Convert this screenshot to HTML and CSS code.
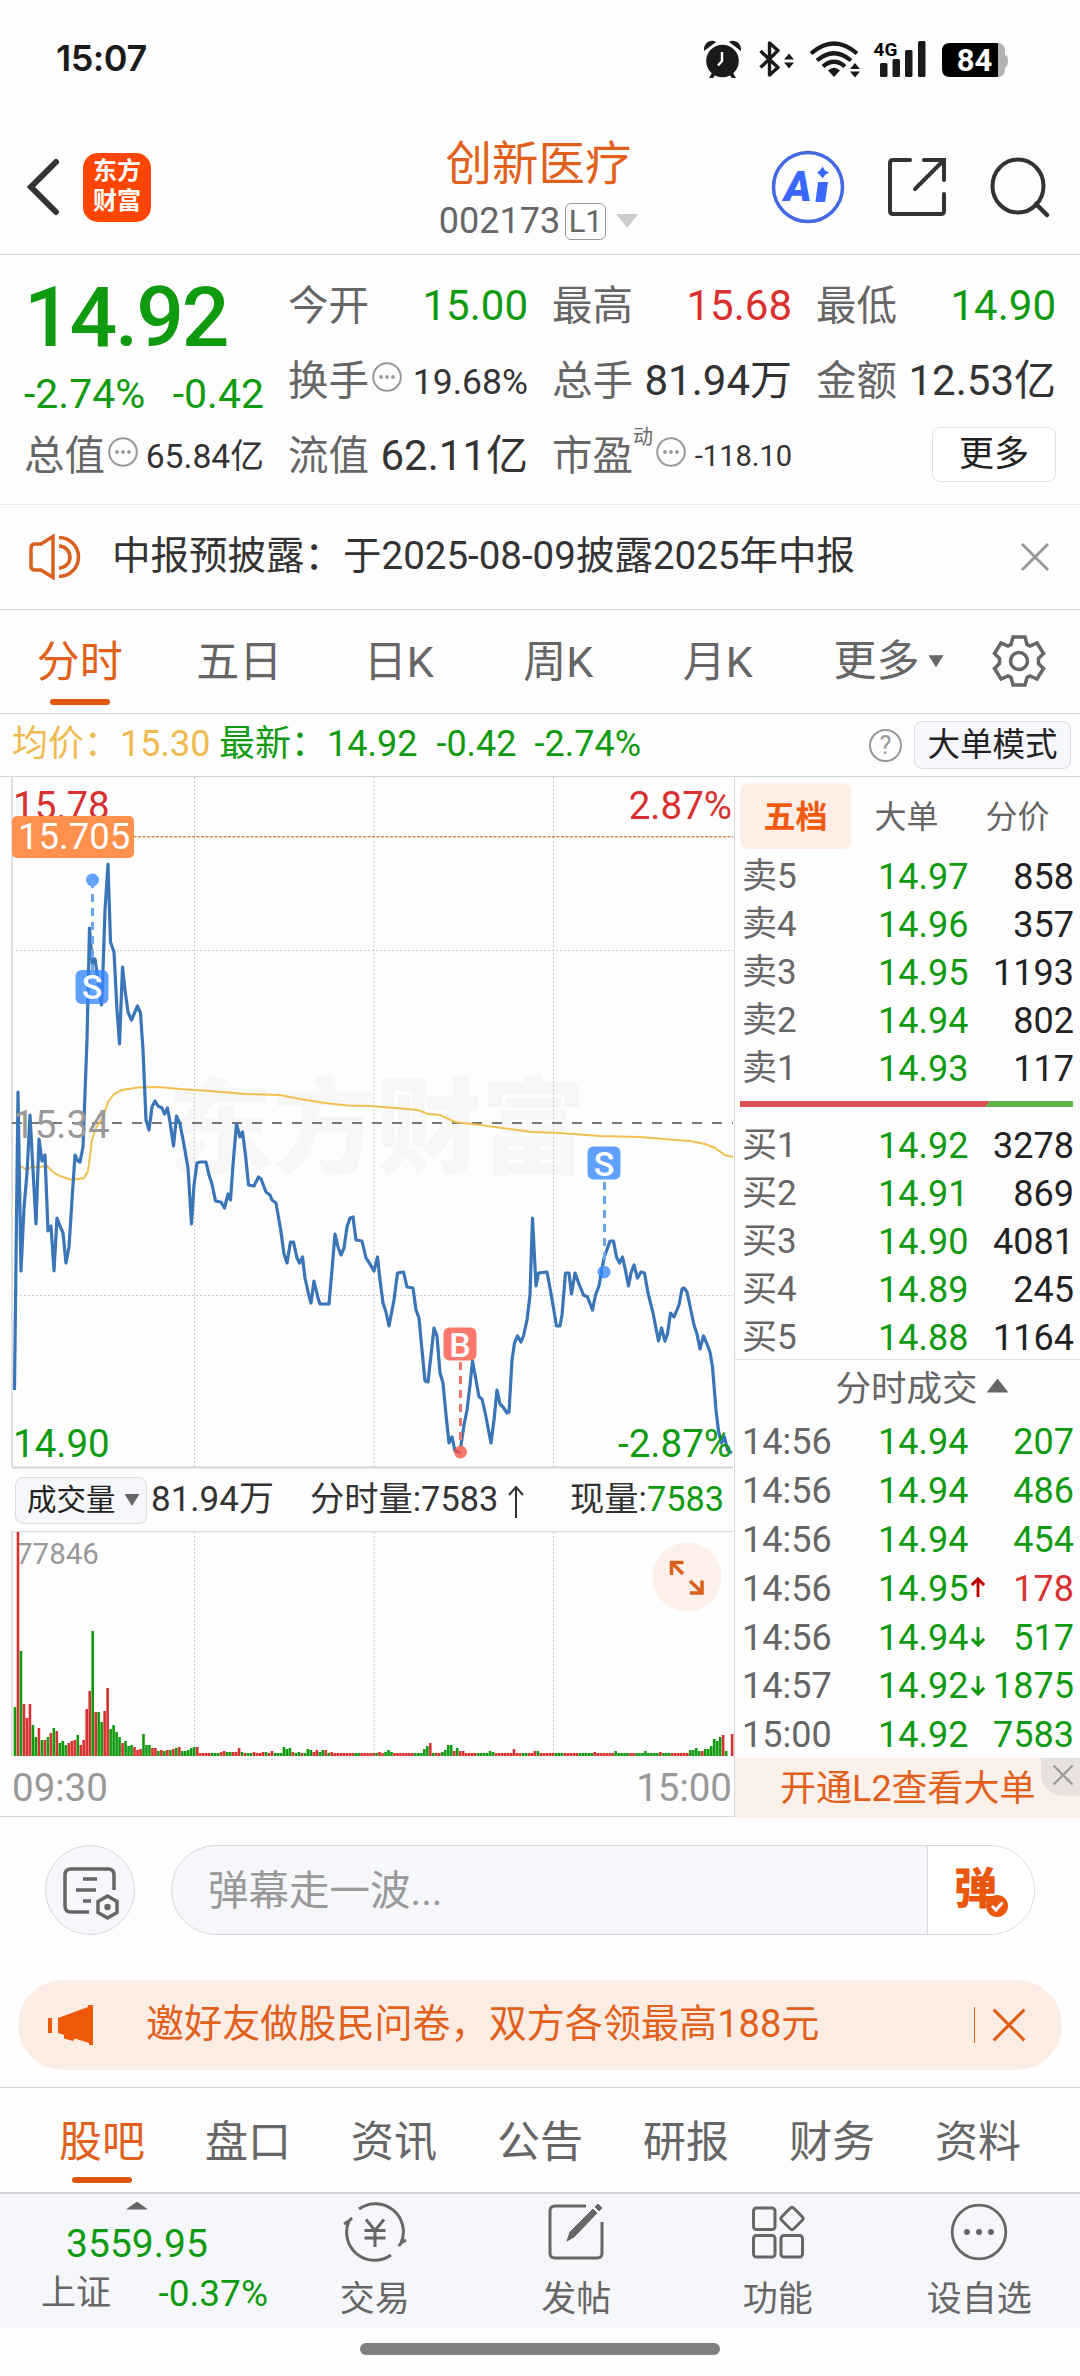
FILE: index.html
```html
<!DOCTYPE html>
<html lang="zh-CN">
<head>
  <meta charset="UTF-8" />
  <meta name="viewport" content="width=device-width, initial-scale=1" />
  <title>创新医疗 002173</title>
  <link rel="stylesheet" href="styles.css">
</head>
<body>

  <svg class="defs" width="0" height="0">
    <symbol id="dots" viewBox="0 0 30 30">
      <circle cx="15" cy="15" r="13.8" fill="none" stroke="#999" stroke-width="2" />
      <circle cx="9" cy="15" r="1.9" fill="#999" />
      <circle cx="15" cy="15" r="1.9" fill="#999" />
      <circle cx="21" cy="15" r="1.9" fill="#999" />
    </symbol>
    <symbol id="cross" viewBox="0 0 30 30">
      <path d="M2 2 L28 28 M28 2 L2 28" fill="none" stroke="currentColor" stroke-width="3" />
    </symbol>
    <symbol id="up" viewBox="0 0 16 22">
      <path d="M8 21 V2 M1.5 8.5 L8 2 L14.5 8.5" fill="none" stroke="currentColor" stroke-width="3" />
    </symbol>
  </svg>

  <!-- 状态栏 -->
  <div class="status">
    <span class="time">15:07</span>
    <svg width="320" height="50" viewBox="700 34 320 50">
      <g fill="#1a1a1a">
        <circle cx="722.5" cy="61" r="16.3" />
        <path d="M704 51 C703 43 711 38.500 716 42 Z M741 51 C742 43 734 38.500 729 42 Z" />
        <path d="M712 73 L709 78 L713 78 L716 74 Z M733 73 L736 78 L732 78 L729 74 Z" />
        <path d="M784 59.500 L789 53.500 L794 59.500 Z M784 62.500 L789 68.500 L794 62.500 Z" />
        <path d="M850 69 L855 63 L860 69 Z M850 71.500 L855 77.500 L860 71.500 Z" />
        <path d="M834 77 L828 70.500 Q834 65 840 70.500 Z" />
        <rect x="880" y="63" width="7.500" height="14" rx="1.500" />
        <rect x="892.500" y="59" width="7.500" height="18" rx="1.500" />
        <rect x="905" y="50" width="7.500" height="27" rx="1.500" />
        <rect x="918" y="41" width="7.500" height="36" rx="1.500" />
      </g>
      <path d="M722 52 V61 L718 65.500" fill="none" stroke="#fff" stroke-width="2.400" />
      <path d="M760.500 51 L778 67.500 L769.500 75 V43 L778 50.500 L760.500 67.500" fill="none" stroke="#1a1a1a" stroke-width="3.400" stroke-linejoin="round" />
      <path d="M811 53.500 Q834 33.500 857 53.500 M817 60.500 Q834 46 851 60.500 M823 66.500 Q834 57 845 66.500" fill="none" stroke="#1a1a1a" stroke-width="4.200" />
      <text x="873.500" y="56" class="net">4G</text>
      <path d="M996 43 h1 q8 0 8 8 v4 q3 0 3 6 t-3 6 v3 q0 7 -8 7 h-1 z" fill="#b3b3b3" />
      <path d="M950 43 H998 V77 H950 Q942 77 942 69 V51 Q942 43 950 43 Z" fill="#000" />
      <text x="974.500" y="71" class="battery" text-anchor="middle">84</text>
    </svg>
  </div>

  <!-- 标题栏 -->
  <header class="header">
    <div class="side">
      <svg width="34" height="58" viewBox="0 0 34 58"><path d="M30 4 L5 29 L30 54" fill="none" stroke="#333" stroke-width="6" stroke-linecap="round" /></svg>
      <div class="logo">东方<br>财富</div>
    </div>
    <div class="title">
      <h1>创新医疗</h1>
      <div class="code">002173<span class="level">L1</span><i class="tri down light"></i></div>
    </div>
    <div class="side right">
      <svg width="74" height="74" viewBox="0 0 74 74">
        <circle cx="37" cy="37" r="34.500" fill="none" stroke="#4468e2" stroke-width="3.500" />
        <text x="13" y="51" class="ai">A</text>
        <path d="M47 32 H57 L54 52 H44.500 Z M51.500 16.500 L54 20.500 L58 22.500 L54 25 L51.500 28.500 L49 25 L46 22.500 L49 20.500 Z" fill="#3a68ff" />
      </svg>
      <svg width="60" height="60" viewBox="0 0 60 60">
        <path d="M23 3 H6 Q3 3 3 6 V54 Q3 57 6 57 H54 Q57 57 57 54 V37 M37 3 H57 V23 M56 4 L28 32" fill="none" stroke="#333" stroke-width="4" stroke-linecap="round" />
      </svg>
      <svg width="62" height="62" viewBox="0 0 62 62">
        <ellipse cx="29" cy="30" rx="25.500" ry="26.500" fill="none" stroke="#333" stroke-width="4" />
        <path d="M47 48 L58 59" fill="none" stroke="#333" stroke-width="4.500" stroke-linecap="round" />
      </svg>
    </div>
  </header>

  <!-- 行情 -->
  <section class="quote">
    <div class="price green">
      <strong>14.92</strong>
      <div class="change"><span>-2.74%</span><span>-0.42</span></div>
    </div>
    <div class="cell"><label>今开</label><b class="green">15.00</b></div>
    <div class="cell"><label>最高</label><b class="red">15.68</b></div>
    <div class="cell"><label>最低</label><b class="green">14.90</b></div>
    <div class="cell"><label>换手</label><svg class="dots"><use href="#dots" /></svg><b class="s35">19.68%</b></div>
    <div class="cell"><label>总手</label><b>81.94万</b></div>
    <div class="cell"><label>金额</label><b>12.53亿</b></div>
    <div class="cell"><label>总值</label><svg class="dots"><use href="#dots" /></svg><b class="s33">65.84亿</b></div>
    <div class="cell"><label>流值</label><b>62.11亿</b></div>
    <div class="cell"><label>市盈</label><sup>动</sup><svg class="dots"><use href="#dots" /></svg><b class="s29">-118.10</b></div>
    <div class="cell"><button class="more">更多</button></div>
  </section>

  <section class="notice">
    <svg width="52" height="46" viewBox="0 0 52 46">
      <path d="M24 2.500 V43.500 L12 36 H6 Q2 36 2 32 V14 Q2 10 6 10 H12 Z M30 12 A11 11 0 0 1 30 34 M30 3.500 A19.500 19.500 0 0 1 30 42.500" fill="none" stroke="#d9601f" stroke-width="3.500" />
    </svg>
    <p>中报预披露：于2025-08-09披露2025年中报</p>
    <svg class="close"><use href="#cross" /></svg>
  </section>

  <nav class="periods">
    <a class="active">分时</a>
    <a>五日</a>
    <a>日K</a>
    <a>周K</a>
    <a>月K</a>
    <a class="wide">更多<i class="tri down"></i></a>
    <svg width="54" height="54" viewBox="-27 -27 54 54">
      <path d="M-6 -24 H6 L8 -16.500 L11 -15 L18 -18 L24.500 -7.500 L19.500 -2.500 V2.500 L24.500 7.500 L18 18 L11 15 L8 16.500 L6 24 H-6 L-8 16.500 L-11 15 L-18 18 L-24.500 7.500 L-19.500 2.500 V-2.500 L-24.500 -7.500 L-18 -18 L-11 -15 L-8 -16.500 Z" fill="none" stroke="#666" stroke-width="3.500" />
      <circle r="8.500" fill="none" stroke="#666" stroke-width="3.500" />
    </svg>
  </nav>

  <div class="summary">
    <span class="avg">均价：15.30</span>
    <span class="green latest">最新：14.92</span>
    <span class="green">-0.42</span>
    <span class="green">-2.74%</span>
    <span class="help">?</span>
    <button>大单模式</button>
  </div>

  <main class="main">
    <div class="left">
      <!-- 分时图 -->
      <svg class="chart" width="734" height="692" viewBox="0 777 734 692">
        <text class="mark" x="168" y="1165" textLength="418">东方财富</text>
        <g fill="none" stroke="#ccc" stroke-width="1" stroke-dasharray="2 2">
          <path d="M194.500 777 V1467 M374 777 V1467 M553.500 777 V1467 M12 950.500 H733 M12 1295.500 H733" />
        </g>
        <path d="M12 777 V1467" stroke="#e0e0e0" stroke-width="2" />
        <path d="M12 1467.500 H733" stroke="#d6d6d6" stroke-width="2" />
        <path d="M12 836.800 H733" stroke="#d98a5c" stroke-width="1.600" stroke-dasharray="3 1.500" />
        <path d="M12 1123 H733" stroke="#777" stroke-width="2" stroke-dasharray="10 10" />
        <text class="axis red" x="13" y="819">15.78</text>
        <text class="axis red" x="732" y="819" text-anchor="end">2.87%</text>
        <text class="axis green" x="13" y="1457">14.90</text>
        <polyline class="avg-line" points="18,1166 22,1167 27,1170 31,1167 38,1167 47,1166 54,1173 60,1176 72,1180 84,1178 88,1171 92,1140 96,1128 103,1117 108,1102 114,1094 122,1090 138,1087.5 158,1087 180,1089 210,1091 245,1094 280,1095 300,1099 325,1103 348,1105.5 370,1106 395,1108 418,1110 428,1114 440,1115 455,1122 480,1125 510,1129 532,1132 560,1133 600,1136 640,1137 675,1140 690,1141 705,1144 715,1148 725,1155 733,1157" />
        <polyline class="price-line" points="14.5,1390 18,1092 21,1271 24,1208 27,1173 30,1115 33,1170 36,1224 39,1139 42,1161 45,1155 48,1231 51,1226 54,1271 57,1218 60,1226 63,1233 66,1263 69,1247 72,1200 75,1155 78,1161 80,1162 83,1147 84,1120 87,1040 89.5,928 92.5,965 95,959 98,980 101.5,1005 103,970 105,910 108,864 110.5,942 114,952 117,1010 119.5,1044 122.5,967 125,990 128,1012 131.500,1020 137.5,1006 140.5,1013 143,1050 146,1120 149,1130 152,1107 155,1101 158,1106 162,1108 164.5,1114 167.5,1108 170,1122 173.5,1146 176.5,1116 180,1124 184,1145 188,1168 191.5,1224 194,1185 197,1163 200,1162 206,1162 209,1175 212,1184 215.5,1201 221,1202 224.5,1208 228,1194 230.5,1200 233,1165 236.5,1124 240,1137 242.5,1132 245.5,1155 248.5,1185 254,1186 258.5,1177 261,1179 266,1192 270,1195 272,1200 276,1203 281,1232 284,1254 287,1263 290.5,1242 293.5,1242 297,1258 299.5,1263 302.5,1257 305,1278 309,1296 311,1303 314,1281 318,1298 320,1304 329,1304 332,1270 335,1234 338,1247 341,1255 344,1248 347,1227 350,1218 353,1217 356,1240 362,1241 366,1258 370,1264 374,1271 377.5,1257 380,1280 383,1303 386,1312 389,1326 394,1300 397.5,1273 403.5,1272 407,1287 413,1288 416,1310 419,1318 421.5,1345 425,1381 428,1382 434,1328 437,1336 440,1373 443,1383 446,1415 449,1443 452,1437 455,1451 460,1452 464,1425 467,1410 470,1385 472.5,1361 476,1380 479,1397 482,1399 485,1412 491,1443 494,1420 497,1390 500,1404 503,1407 507,1413 509,1412 512,1360 514.5,1343 517.5,1336 521,1342 523.5,1336 527,1320 530,1295 532.5,1218 536,1286 538.5,1273 547,1272 550,1288 553.5,1308 556.5,1326 560,1326 562,1315 565.5,1273 569,1273 571.5,1294 575,1273 579,1284 583.5,1295 587.5,1297 592.5,1310 595.5,1295 599,1286 604,1258 610,1241 613.5,1241 616.5,1257 619.5,1263 622.5,1257 625,1268 628.5,1286 631,1273 634,1265 637.5,1278 641,1272 644.5,1273 648,1293 653,1313 658.5,1341 661.5,1328 665,1341 667.5,1334 670.5,1313 674,1317 679,1305 682,1289 684,1288 687,1292 690,1306 694,1325 697,1334 700,1349 703.5,1336 707,1344 710,1352 712.5,1367 716,1410 718.5,1431 721.5,1443 724.5,1437 727.5,1450 732,1453" />
        <text class="axis grey" x="13" y="1138">15.34</text>
        <text class="axis green" x="732" y="1457" text-anchor="end">-2.87%</text>

        <!-- 最高提示 -->
        <rect x="12" y="816" width="122" height="42" rx="5" fill="#ff914d" />
        <text class="tip" x="18" y="849">15.705</text>

        <!-- 买卖点 -->
        <g class="sell">
          <circle cx="92.500" cy="880" r="6.500" />
          <path d="M92.500 880 V970" />
          <rect x="75.500" y="970" width="33" height="34" rx="6" />
          <text x="92" y="999">S</text>
          <circle cx="604" cy="1272" r="6.500" />
          <path d="M604.500 1182 V1272" />
          <rect x="587.500" y="1146.500" width="33" height="33" rx="6" />
          <text x="604" y="1175.500">S</text>
        </g>
        <g class="buy">
          <circle cx="460.500" cy="1452" r="6.500" />
          <path d="M460.500 1362 V1452" />
          <rect x="443.500" y="1327.500" width="33" height="33" rx="6" />
          <text x="460" y="1356.500">B</text>
        </g>
      </svg>

      <div class="volume-bar">
        <button>成交量<i class="tri down"></i></button>
        <span class="total">81.94万</span>
        <span class="minute">分时量:7583<svg width="16" height="34" viewBox="0 0 16 34"><path d="M8 33 V2 M1 10 L8 2 L15 10" fill="none" stroke="#333" stroke-width="2" /></svg></span>
        <span class="now">现量:<em class="green">7583</em></span>
      </div>

      <!-- 成交量柱 -->
      <svg class="chart" width="734" height="226" viewBox="0 1531 734 226">
        <path d="M194.500 1532 V1756 M374 1532 V1756 M553.500 1532 V1756" fill="none" stroke="#ccc" stroke-width="1" stroke-dasharray="2 2" />
        <path d="M12 1757 V1531.500 H733" fill="none" stroke="#ddd" stroke-width="1.500" />
        <text x="16" y="1564" class="max">77846</text>
        <path id="red-bars" fill="#d93030" />
        <path id="green-bars" fill="#109a10" />
        <circle cx="687" cy="1577" r="34.500" fill="#fdf0e9" />
        <path d="M683.500 1562.500 H671.500 V1575 M672 1563 L683 1574 M690 1593 H702 V1580.500 M701.500 1592 L690 1581" fill="none" stroke="#d9601f" stroke-width="3.500" />
      </svg>
      <div class="hours"><span>09:30</span><span>15:00</span></div>
    </div>

    <aside class="depth">
      <div class="depth-tabs"><span class="on">五档</span><span>大单</span><span>分价</span></div>
      <div class="rows">
        <div class="row"><i>卖5</i><b>14.97</b><u>858</u></div>
        <div class="row"><i>卖4</i><b>14.96</b><u>357</u></div>
        <div class="row"><i>卖3</i><b>14.95</b><u>1193</u></div>
        <div class="row"><i>卖2</i><b>14.94</b><u>802</u></div>
        <div class="row"><i>卖1</i><b>14.93</b><u>117</u></div>
      </div>
      <svg class="ratio" width="333" height="6" viewBox="0 0 333 6">
        <path d="M0 0 H250 L245 6 H0 Z" fill="#dc5050" />
        <path d="M250 0 H333 V6 H245 Z" fill="#62b34a" />
      </svg>
      <div class="rows">
        <div class="row"><i>买1</i><b>14.92</b><u>3278</u></div>
        <div class="row"><i>买2</i><b>14.91</b><u>869</u></div>
        <div class="row"><i>买3</i><b>14.90</b><u>4081</u></div>
        <div class="row"><i>买4</i><b>14.89</b><u>245</u></div>
        <div class="row"><i>买5</i><b>14.88</b><u>1164</u></div>
      </div>
      <div class="deals-title">分时成交<i class="tri"></i></div>
      <div class="rows deals">
        <div class="row"><i>14:56</i><b>14.94</b><u class="green">207</u></div>
        <div class="row"><i>14:56</i><b>14.94</b><u class="green">486</u></div>
        <div class="row"><i>14:56</i><b>14.94</b><u class="green">454</u></div>
        <div class="row"><i>14:56</i><b>14.95<svg class="arrow rise"><use href="#up" /></svg></b><u class="red">178</u></div>
        <div class="row"><i>14:56</i><b>14.94<svg class="arrow fall"><use href="#up" /></svg></b><u class="green">517</u></div>
        <div class="row"><i>14:57</i><b>14.92<svg class="arrow fall"><use href="#up" /></svg></b><u class="green">1875</u></div>
        <div class="row"><i>15:00</i><b>14.92</b><u class="green">7583</u></div>
      </div>
      <div class="level2">开通L2查看大单<span class="chip"><svg width="22" height="22"><use href="#cross" /></svg></span></div>
    </aside>
  </main>

  <!-- 弹幕 -->
  <div class="danmu">
    <div class="round">
      <svg width="58" height="56" viewBox="0 0 58 56">
        <path d="M27 46 H9 Q3 46 3 40 V9 Q3 3 9 3 H46 Q52 3 52 9 V24" fill="none" stroke="#666" stroke-width="3.500" />
        <path d="M21 13 H35 M14 24 H34 M21 35 H29" stroke="#666" stroke-width="3.500" />
        <path d="M45.500 30 L55 35.500 V46.500 L45.500 52 L36 46.500 V35.500 Z" fill="none" stroke="#666" stroke-width="3.500" />
        <circle cx="45.500" cy="41" r="3.200" fill="#666" />
      </svg>
    </div>
    <div class="input">
      <span class="placeholder">弹幕走一波...</span>
      <span class="toggle">弹<svg class="badge" width="24" height="24" viewBox="0 0 24 24"><circle cx="12" cy="12" r="11" fill="#e8570c" /><path d="M7 12 L11 16 L17.500 8.500" fill="none" stroke="#fff" stroke-width="3" /></svg></span>
    </div>
  </div>

  <div class="banner">
    <svg width="46" height="40" viewBox="0 0 46 40">
      <path d="M0 13 H4 V28 H0 Z M10 13 L40 2 V0 H45 V40 H41 V38 L27 33.500 L25 36 L16 33.500 V30 L10 28 Z" fill="#ee5a08" />
    </svg>
    <p>邀好友做股民问卷，双方各领最高188元</p>
    <span class="bar"></span>
    <svg width="34" height="34" viewBox="0 0 30 30"><path d="M1.500 1.500 L28.500 28.500 M28.500 1.500 L1.500 28.500" stroke="#e0601c" stroke-width="2.800" /></svg>
  </div>

  <nav class="sections">
    <a class="active">股吧</a><a>盘口</a><a>资讯</a><a>公告</a><a>研报</a><a>财务</a><a>资料</a>
  </nav>

  <footer class="toolbar">
    <div class="index">
      <i class="tri small"></i>
      <div class="green point">3559.95</div>
      <div class="line"><span>上证</span><span class="green rate">-0.37%</span></div>
    </div>
    <div class="tool">
      <svg width="68" height="60" viewBox="-34 -30 68 60">
        <g fill="none" stroke="#666" stroke-width="3">
          <path d="M-16 -23 A28 28 0 0 1 26 11 L31 8 M26 11 L24 14 M16 23 A28 28 0 0 1 -26 -11 L-31 -8 M-26 -11 L-23 -14" />
          <path d="M-9 -12.500 L0 -1.500 L9 -12.500 M0 -1.500 V15 M-10.500 -1.500 H10.500 M-10.500 6 H10.500" />
        </g>
      </svg>
      <span>交易</span>
    </div>
    <div class="tool">
      <svg width="60" height="60" viewBox="-30 -30 60 60">
        <path d="M10 -26 H-21 Q-26 -26 -26 -21 V21 Q-26 26 -21 26 H21 Q26 26 26 21 V-10" fill="none" stroke="#666" stroke-width="3" />
        <path d="M-9 9 L-6 0 L17 -23 L21 -19 L-2 5 Z M19 -25 L22 -28 L26 -24 L23 -21 Z" fill="#666" stroke="#666" />
      </svg>
      <span>发帖</span>
    </div>
    <div class="tool">
      <svg width="60" height="60" viewBox="-30 -30 60 60">
        <g fill="none" stroke="#666" stroke-width="3">
          <rect x="-24.500" y="-24" width="21.500" height="21.500" rx="3" />
          <rect x="-24.500" y="3.500" width="21.500" height="21.500" rx="3" />
          <rect x="3" y="3.500" width="21.500" height="21.500" rx="3" />
          <rect x="5.500" y="-22" width="17" height="17" rx="2.500" transform="rotate(45 14 -13.500)" />
        </g>
      </svg>
      <span>功能</span>
    </div>
    <div class="tool">
      <svg width="60" height="60" viewBox="-30 -30 60 60">
        <circle r="26.800" fill="none" stroke="#666" stroke-width="2.800" />
        <g fill="#666"><circle cx="-12" r="3" /><circle r="3" /><circle cx="12" r="3" /></g>
      </svg>
      <span>设自选</span>
    </div>
  </footer>
  <div class="home"><span></span></div>

  <script src="script.js"></script>
</body>
</html>
```
FILE: styles.css
```css
* { margin: 0; padding: 0; box-sizing: border-box; }

body {
  width: 1080px;
  height: 2376px;
  overflow: hidden;
  background: #fefefe;
  color: #333;
  font-family: Roboto, "Noto Sans CJK SC", sans-serif;
  line-height: 1.2;
}

svg { display: block; flex: none; }
.defs { position: absolute; }
i, em, u { font-style: normal; text-decoration: none; }
b { font-weight: 400; }
button { font-family: inherit; color: #222; background: #f6f7fa; border: 1.5px solid #d9dbe0; border-radius: 8px; }

.green { color: #109a10; fill: #109a10; }
.red { color: #d93030; fill: #d93030; }

.tri {
  width: 22px;
  height: 14px;
  background: #666;
  clip-path: polygon(50% 0, 100% 100%, 0 100%);
}
.tri.down { clip-path: polygon(0 0, 100% 0, 50% 100%); }
.tri.light { background: #ccc; }

/* 状态栏 */
.status {
  height: 116px;
  padding: 34px 60px 0 56px;
  display: flex;
  justify-content: space-between;
}
.time {
  font: 600 36px/48px Inter, sans-serif;
  letter-spacing: -0.5px;
  color: #1a1a1a;
}
.net { font: 700 19px Roboto, sans-serif; }
.battery { font: 700 31px Roboto, sans-serif; fill: #fff; }

/* 标题栏 */
.header {
  height: 139px;
  border-bottom: 1.5px solid #d6d6d6;
  display: flex;
  justify-content: space-between;
  padding: 0 29px 0 26px;
}
.side { width: 280px; display: flex; align-items: center; padding-top: 4px; }
.side.right { gap: 42px; width: 280px; justify-content: flex-end; }
.logo {
  width: 68px;
  height: 69px;
  margin-left: 23px;
  border-radius: 15px;
  background: #ff4500;
  color: #fff;
  font-size: 24px;
  font-weight: 700;
  line-height: 30px;
  padding-top: 3px;
  text-align: center;
}
.title { text-align: center; }
.title h1 {
  font-size: 46.5px;
  font-weight: 400;
  line-height: 60px;
  padding-top: 18px;
  height: 80px;
  color: #e0601c;
  margin-left: 0;
}
.code { display: flex; align-items: center; justify-content: center; color: #666; font-size: 36px; line-height: 50px; height: 50px; }
.level {
  width: 41px;
  height: 37px;
  margin: 0 10px 0 5px;
  border: 1.5px solid #999;
  border-radius: 6px;
  font-size: 31px;
  line-height: 35px;
}
.ai { font: italic 900 42px Roboto, sans-serif; fill: #3a68ff; }

/* 行情 */
.quote {
  height: 249.5px;
  padding: 14px 24px 0;
  border-bottom: 1.5px solid #eaeaea;
  display: grid;
  grid-template-columns: repeat(4, 240px);
  grid-template-rows: repeat(3, 75px);
  column-gap: 24px;
}
.price { grid-row: span 2; }
.price strong { display: block; font-size: 84px; font-weight: 500; line-height: 80px; margin-top: 9px; letter-spacing: -2.2px; }
.change { display: flex; justify-content: space-between; font-size: 41px; line-height: 60px; margin-top: 6px; }
.cell { display: flex; align-items: center; white-space: nowrap; }
.cell label { font-size: 40.5px; color: #666; }
.cell b { margin-left: auto; font-size: 42px; }
.cell .s35 { font-size: 35.5px; padding-top: 1px; }
.cell .s33 { font-size: 33.7px; padding-top: 1px; }
.cell .s29 { font-size: 29px; }
.dots { width: 30px; height: 30px; margin: -9px 0 0 3px; }
.cell sup { font-size: 20px; color: #666; margin-top: -40px; }
.cell .more {
  margin: -4px 0 0 auto;
  width: 124px;
  height: 55px;
  font-size: 35px;
  line-height: 50px;
  background: #fff;
  border-color: #e3e3e6;
}

.notice {
  height: 105px;
  border-bottom: 1.5px solid #d6d6d6;
  padding: 0 30px 0 29px;
  display: flex;
  align-items: center;
}
.notice p { flex: 1; margin-left: 31px; font-size: 38.5px; }
.close { width: 30px; height: 30px; color: #999; }

/* 周期 */
.periods { height: 104.5px; border-bottom: 1.5px solid #d6d6d6; display: flex; align-items: center; color: #666; }
.periods a { width: 159.5px; height: 103px; line-height: 105px; font-size: 43px; text-align: center; position: relative; }
.periods .wide { width: 190px; margin-left: -4px; display: flex; align-items: center; justify-content: center; }
.periods .wide .tri { width: 15px; height: 12px; margin: 0 0 0 9px; }
.periods svg { margin-left: 8px; }
.periods .active, .sections .active { color: #e0601c; }
.periods .active::after, .sections .active::after {
  content: "";
  position: absolute;
  left: calc(50% - 30px);
  bottom: 8px;
  width: 60px;
  height: 6px;
  border-radius: 3px;
  background: #e0560f;
}

.summary { height: 63px; border-bottom: 1.5px solid #d6d6d6; display: flex; align-items: center; font-size: 36px; padding: 0 9px 0 12px; white-space: nowrap; }
.summary .avg { color: #f0ba4e; width: 207px; }
.summary .latest { margin-right: 19px; }
.summary .green + .green + .green { margin-left: 18px; }
.help {
  width: 33px;
  height: 33px;
  margin-left: auto;
  border: 2.5px solid #999;
  border-radius: 50%;
  color: #999;
  font-size: 25px;
  line-height: 29px;
  text-align: center;
}
.summary button { width: 157px; height: 48px; margin-left: 12px; font-size: 32.5px; line-height: 44px; }

/* 图表 */
.main { display: flex; height: 1040px; border-bottom: 1.5px solid #d6d6d6; }
.left { width: 734px; }
.mark { font-size: 105px; font-weight: 900; fill: #f7f7f7; }
.axis { font-size: 38.5px; }
.grey { fill: #999; }
.tip { font-size: 36.5px; fill: #fff; }
.price-line { fill: none; stroke: #3975b7; stroke-width: 3.2; stroke-linejoin: round; }
.avg-line { fill: none; stroke: #f2c050; stroke-width: 2; }
.sell, .buy { fill: #3385ff; fill-opacity: .78; }
.buy { fill: #fa4a38; fill-opacity: .74; }
.sell path { stroke: #6ba4ef; stroke-width: 3; stroke-dasharray: 8 6; }
.buy path { stroke: #f0766a; stroke-width: 3; stroke-dasharray: 8 6; }
.sell text, .buy text { font-size: 34px; font-weight: 500; fill: #fff; fill-opacity: 1; text-anchor: middle; }

.volume-bar { height: 62px; padding: 0 10px 0 15px; display: flex; align-items: center; font-size: 35px; white-space: nowrap; }
.volume-bar button { width: 132px; height: 47px; font-size: 29.5px; line-height: 43px; display: flex; align-items: center; padding-left: 11px; }
.volume-bar .tri { width: 15px; height: 12px; margin-left: 9px; }
.total { margin-left: 4px; font-size: 35px; }
.minute { margin-left: 36px; display: flex; align-items: center; font-size: 34.3px; }
.minute svg { margin: 4px 0 0 10px; }
.now { margin-left: auto; font-size: 34.3px; }
.max { font-size: 29.5px; fill: #999; }
.hours { display: flex; justify-content: space-between; padding: 1px 2px 0 12px; font-size: 38.5px; line-height: 59px; color: #999; }

/* 五档 */
.depth { width: 346px; border-left: 1.5px solid #d6d6d6; }
.depth-tabs { height: 75px; padding: 6px 5px 0; display: flex; font-size: 32px; line-height: 69px; color: #666; }
.depth-tabs span { width: 111px; height: 66px; text-align: center; }
.depth-tabs .on { background: #feeee6; color: #f05a10; font-weight: 700; border-radius: 8px; }
.row { height: 48px; padding: 2px 6px 0 7px; display: flex; align-items: center; font-size: 36px; line-height: 46px; }
.row i { width: 136px; color: #666; }
.row b { color: #109a10; display: flex; align-items: center; }
.row u { margin-left: auto; color: #222; }
.row .green { color: #109a10; }
.row .red { color: #d93030; }
.rows .row i { font-size: 35px; }
.deals .row { height: 48.8px; }
.deals .row i { font-size: 36px; }
.arrow { width: 16px; height: 21px; margin: -2px 0 0 2px; }
.rise { color: #c00000; }
.fall { transform: rotate(180deg); }
.ratio { margin: 9px 0 14px 5px; }
.deals-title {
  height: 58px;
  border-top: 1.5px solid #e3e3e3;
  color: #666;
  font-size: 35.5px;
  line-height: 60px;
  display: flex;
  align-items: center;
  justify-content: center;
  padding-left: 29px;
  margin-top: -2px;
}
.deals-title .tri { margin: -6px 0 0 9px; }
.level2 {
  position: relative;
  height: 60px;
  margin-top: -1px;
  background: #fcf0ea;
  color: #e0601c;
  font-size: 36px;
  line-height: 62px;
  padding-left: 45px;
}
.chip {
  position: absolute;
  top: 0;
  right: 0;
  width: 39px;
  height: 38px;
  padding: 6px 0 0 11px;
  background: #e9e1dd;
  border-radius: 0 0 0 22px;
  color: #999;
}

/* 弹幕 */
.danmu { height: 163px; padding: 28px 45px 0; display: flex; gap: 36px; }
.round { width: 90px; height: 90px; border: 1.5px solid #d6d8dc; border-radius: 50%; background: #f6f7fa; padding: 20px 0 0 16px; }
.input { width: 864px; height: 90px; border: 1.5px solid #d6d8dc; border-radius: 45px; background: #f6f7fa; display: flex; justify-content: space-between; overflow: hidden; }
.placeholder { font-size: 40.5px; line-height: 91px; color: #999; padding-left: 36px; }
.toggle { position: relative; width: 107px; border-left: 1.5px solid #d6d8dc; background: #fff; font-size: 43px; font-weight: 900; line-height: 87px; color: #e8570c; padding-left: 26px; }
.badge { position: absolute; left: 57px; top: 48px; border-radius: 50%; }

.banner { height: 90px; margin: 0 18px; border-radius: 45px; background: #fcede4; display: flex; align-items: center; padding: 0 36px 0 30px; color: #e0601c; }
.banner p { flex: 1; font-size: 38.1px; margin-left: 52px; }
.bar { width: 1.5px; height: 36px; background: #e0601c; margin-right: 17px; }

.sections { height: 107px; margin-top: 16.5px; border-top: 1.5px solid #d6d6d6; border-bottom: 2px solid #d6d6d6; display: flex; padding: 0 29px; color: #666; }
.sections a { position: relative; width: 146px; font-size: 43px; line-height: 109px; text-align: center; }
.sections .active::after { bottom: 9px; }

/* 底部 */
.toolbar { height: 134.5px; background: #f6f7fa; display: flex; color: #666; font-size: 35px; }
.index { width: 274px; display: flex; flex-direction: column; align-items: center; padding-top: 8px; }
.tri.small { width: 22px; height: 8px; }
.point { font-size: 39px; line-height: 50px; margin-top: 9px; }
.line { width: 100%; display: flex; justify-content: space-between; line-height: 49px; padding: 0 6px 0 41px; }
.rate { font-size: 37px; }
.tool { width: 201.5px; text-align: center; padding-top: 8px; line-height: 50px; }
.tool svg { margin: 0 auto 13px; }
.home { padding-top: 15px; }
.home span { display: block; width: 360px; height: 12px; margin: 0 auto; border-radius: 6px; background: #808080; }
```
FILE: script.js
```js
// 每分钟成交量: 颜色 + 高度, "*n" 表示重复
const volumes = 'g49 r224 g105 r52 r38 r52 g31 g19 r28 g16 r16 g19 r23 g28 r25 g13 g15 g11 r13 r15 r16 g21 r11 r16 r47 r65 g125 r44 g44 g34 r45 r68 g27 g31 g24 g19 r13 g15 g10 g11 r9 r6 r7 g22 g11 g11 r8 r8 g5 r6 g5 r6 g6 r7 g8 r9 g5 g5 g6 g8 g9 ' +
  'r9 r3*4 g3*3 r4 r5 g4*2 r4*2 r8 g4 r3 g3*2 r4 r3*2 r4 g4 r3 r5 g3*3 g9 g7 g8 r4 g3 g4 r3 g3 g7 g6 r4 r6 g4 g6 r6 g3 r4 ' +
  'r3*7 g3*2 r3*5 g3 r4 r3 g4 g6 g4 r3*7 g3*3 g7 g10 r13 g3 r3*2 g4 g6 g11 g11 r5 g8 r5*2 r3*4 g3*4 g5 g4 r3*6 r7 r3*2 g3*2 r3*2 r5 g5 r3*5 g3*3 r3*5 g3*5 r4 r3*6 g5 g3*4 r3*2 g3*3 g5 g3*4 r4 g3*3 r3*6 ' +
  'g6 g6 g8 g5 r5 g7 g7 g10 g17 g15 g19 r21 g5 r0 r22';

const paths = { r: '', g: '' };
let i = 0;
volumes.split(' ').forEach(item => {
  const [bar, times] = item.split('*');
  const h = Number(bar.slice(1));
  for (let n = 0; n < (times || 1); n++) {
    const x = (13.7 + i * 2.988).toFixed(2);
    paths[bar[0]] += `M${x} 1756v-${h}h2.6v${h}z`;
    i++;
  }
});

document.getElementById('red-bars').setAttribute('d', paths.r);
document.getElementById('green-bars').setAttribute('d', paths.g);
```
